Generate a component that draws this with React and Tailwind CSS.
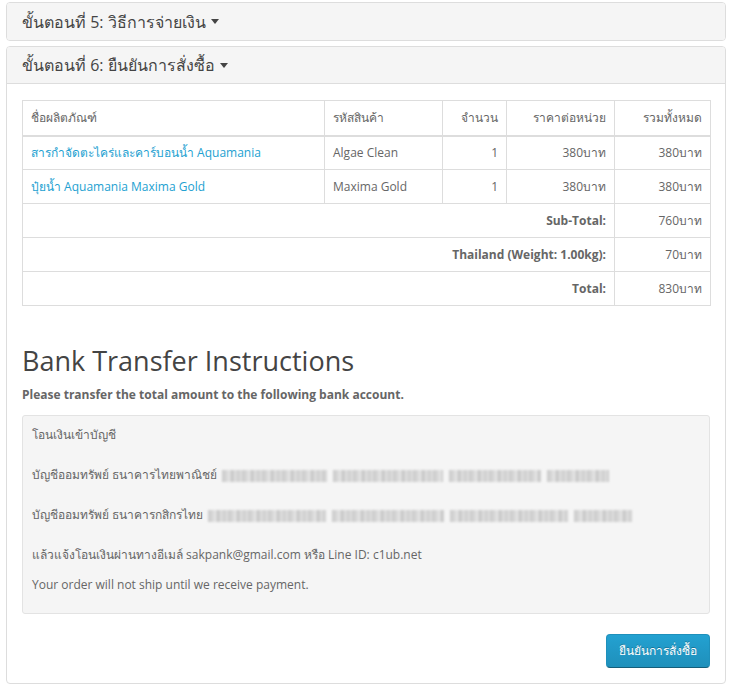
import React from "react";

const font = { fontFamily: '"Open Sans", "Noto Sans", "DejaVu Sans", sans-serif' };

function Caret() {
  return (
    <span className="ml-[5px] inline-block h-0 w-0 align-middle border-x-[4px] border-t-[5px] border-x-transparent border-t-[#444]" />
  );
}

function Blur({ words }) {
  return (
    <span className="inline-flex items-center align-middle ml-[5px] gap-[6px] blur-[1px]">
      {words.map((w, i) => (
        <span
          key={i}
          className="inline-block h-[12px] bg-[repeating-linear-gradient(90deg,#cacaca_0px,#d8d8d8_5px,#e8e8e8_7px,#c4c4c4_10px,#dedede_13px,#cecece_17px,#e6e6e6_20px)]"
          style={{ width: w }}
        />
      ))}
    </span>
  );
}

export default function App() {
  const td = "border border-[#ddd] px-[8px] h-[34px] align-middle";
  return (
    <div className="bg-white w-[732px] min-h-[694px] pt-[2px] px-[6px] text-[12px] text-[#666]" style={font}>
      <div className="border border-[#ddd] rounded-[4px] bg-white">
        <div className="bg-[#f5f5f5] rounded-[3px] h-[37px] px-[15px] flex items-center text-[16px] text-[#444]">
          ขั้นตอนที่ 5: วิธีการจ่ายเงิน <Caret />
        </div>
      </div>

      <div className="mt-[5px] border border-[#ddd] rounded-[4px] bg-white">
        <div className="bg-[#f5f5f5] rounded-t-[3px] h-[37px] px-[15px] flex items-center text-[16px] text-[#444] border-b border-[#ddd]">
          ขั้นตอนที่ 6: ยืนยันการสั่งซื้อ <Caret />
        </div>
        <div className="px-[15px] pt-[16px] pb-[15px]">
          <table className="w-[688px] table-fixed border-collapse">
            <thead>
              <tr>
                <td className="border border-[#ddd] border-b-2 px-[8px] h-[35px] w-[302px] text-left">ชื่อผลิตภัณฑ์</td>
                <td className="border border-[#ddd] border-b-2 px-[8px] w-[118px] text-left">รหัสสินค้า</td>
                <td className="border border-[#ddd] border-b-2 px-[8px] w-[64px] text-right">จำนวน</td>
                <td className="border border-[#ddd] border-b-2 px-[8px] w-[108px] text-right">ราคาต่อหน่วย</td>
                <td className="border border-[#ddd] border-b-2 px-[8px] w-[96px] text-right">รวมทั้งหมด</td>
              </tr>
            </thead>
            <tbody>
              <tr>
                <td className={td}><span className="text-[#23a1d1]">สารกำจัดตะไคร่และคาร์บอนน้ำ Aquamania</span></td>
                <td className={td}>Algae Clean</td>
                <td className={td + " text-right"}>1</td>
                <td className={td + " text-right"}>380บาท</td>
                <td className={td + " text-right"}>380บาท</td>
              </tr>
              <tr>
                <td className={td}><span className="text-[#23a1d1]">ปุ๋ยน้ำ Aquamania Maxima Gold</span></td>
                <td className={td}>Maxima Gold</td>
                <td className={td + " text-right"}>1</td>
                <td className={td + " text-right"}>380บาท</td>
                <td className={td + " text-right"}>380บาท</td>
              </tr>
              <tr>
                <td colSpan={4} className={td + " text-right font-bold"}>Sub-Total:</td>
                <td className={td + " text-right"}>760บาท</td>
              </tr>
              <tr>
                <td colSpan={4} className={td + " text-right font-bold"}>Thailand (Weight: 1.00kg):</td>
                <td className={td + " text-right"}>70บาท</td>
              </tr>
              <tr>
                <td colSpan={4} className={td + " text-right font-bold"}>Total:</td>
                <td className={td + " text-right"}>830บาท</td>
              </tr>
            </tbody>
          </table>

          <h2 className="mt-[40px] text-[27px] leading-[30px] text-[#444] font-normal">Bank Transfer Instructions</h2>
          <p className="mt-[9px] mb-[10px] font-bold leading-[20px] text-[12px]">Please transfer the total amount to the following bank account.</p>

          <div className="mt-[2px] bg-[#f5f5f5] border border-[#e3e3e3] rounded-[3px] px-[9px] pt-[9px] pb-[8px] leading-[20px]">
            <p className="mb-[10px]">
              โอนเงินเข้าบัญชี<br />
              <br />
              บัญชีออมทรัพย์ ธนาคารไทยพาณิชย์<Blur words={[105, 110, 92, 62]} /><br />
              <br />
              บัญชีออมทรัพย์ ธนาคารกสิกรไทย<Blur words={[118, 112, 118, 58]} /><br />
              <br />
              แล้วแจ้งโอนเงินผ่านทางอีเมล์ sakpank@gmail.com หรือ Line ID: c1ub.net
            </p>
            <p className="mb-[10px]">Your order will not ship until we receive payment.</p>
          </div>

          <div className="mt-[20px] flex justify-end">
            <button className="h-[34px] px-[12px] rounded-[4px] text-white text-[12px] bg-gradient-to-b from-[#23a1d1] to-[#1f90bb] border border-[#1f90bb] border-b-[#145e7a] [text-shadow:0_-1px_0_rgba(0,0,0,0.25)]">
              ยืนยันการสั่งซื้อ
            </button>
          </div>
        </div>
      </div>
    </div>
  );
}
